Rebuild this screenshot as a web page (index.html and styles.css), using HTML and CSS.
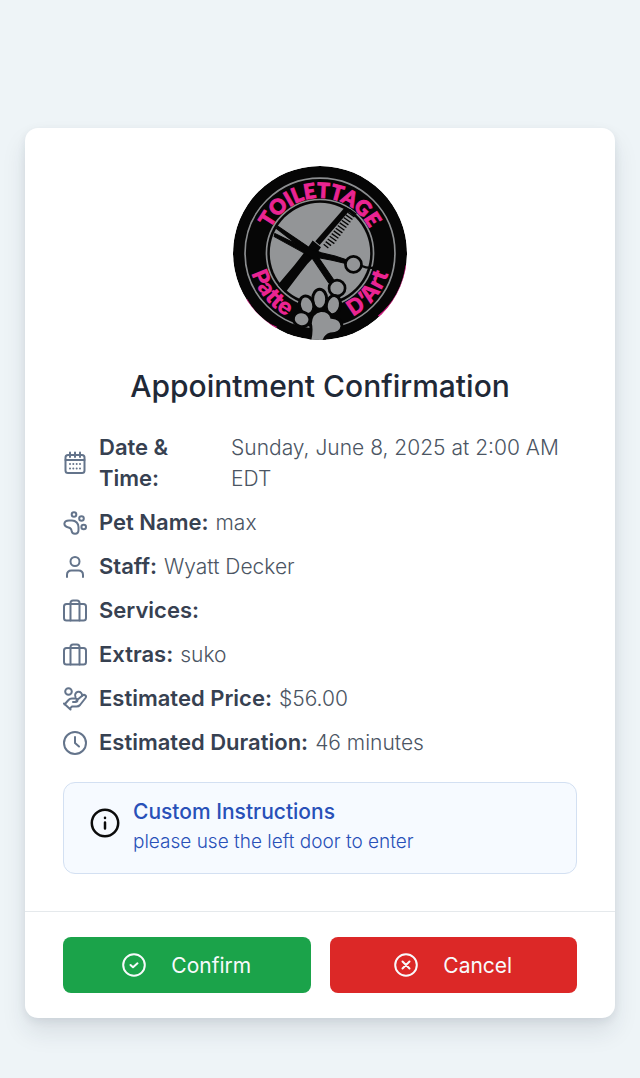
FILE: index.html
```html
<!doctype html>
<html lang="en">
<head>
    <meta charset="UTF-8">
    <meta name="viewport" content="width=device-width, initial-scale=1.0">
    <title>Appointment Confirmation</title>
    <link rel="stylesheet" href="styles.css">
</head>
<body>
    <main class="card">
        <div class="card-body">
            <svg class="logo" viewBox="40 33 520 520" role="img" aria-label="Toilettage Patte D'Art">
                <defs>
                    <path id="arcTop" d="M135 293 A165 165 0 0 1 465 293"/>
                    <path id="arcBottom" d="M86 293 A214 214 0 0 0 514 293"/>
                    <clipPath id="badge"><circle cx="300" cy="293" r="260"/></clipPath>
                </defs>
                <g clip-path="url(#badge)">
                    <circle cx="300" cy="293" r="260" fill="#060606"/>
                    <path d="M558 330 Q545 425 475 482 M80 432 Q115 495 170 516" fill="none" stroke="#d91c85" stroke-width="5"/>
                    <circle cx="300" cy="293" r="224" fill="none" stroke="#8c8e90" stroke-width="5"/>
                    <circle cx="300" cy="293" r="160" fill="none" stroke="#8c8e90" stroke-width="5"/>
                    <circle cx="300" cy="293" r="150" fill="#939597"/>
                    <!-- comb -->
                    <path d="M376 155 L391 163 L299 269 L286 258 Z" fill="#060606"/>
                    <path d="M389 163l20 14M383 171l20 14M377 179l20 14M371 187l20 14M365 195l20 14M359 203l20 14M353 211l20 14M347 219l20 14M341 227l20 14M335 235l20 14M329 243l20 14M323 251l20 14M317 259l16 12M311 267l14 11" stroke="#060606" stroke-width="4"/>
                    <path d="M278 256 L303 276 L285 302 Q260 326 242 351 L196 412 L174 388 L224 329 Q249 297 263 278 Z" fill="#060606"/>
                    <!-- scissors -->
                    <path d="M174 213 L276 282 L304 292 L345 302 L384 315 L379 325 L336 315 L296 307 L340 372 L337 386 L326 382 L277 309 L249 291 L163 244 L165 235 L229 266 L170 220 Z" fill="#060606" stroke="#060606" stroke-width="3"/>
                    <circle cx="400" cy="327" r="24" fill="#939597" stroke="#060606" stroke-width="8"/>
                    <circle cx="351" cy="398" r="24" fill="#939597" stroke="#060606" stroke-width="8"/>
                    <path d="M423 331 Q440 339 460 337" fill="none" stroke="#060606" stroke-width="7"/>
                    <!-- paw -->
                    <g fill="#939597" stroke="#060606" stroke-width="9">
                        <ellipse cx="299" cy="431" rx="21" ry="30"/>
                        <ellipse cx="260" cy="449" rx="21" ry="28" transform="rotate(-15 260 449)"/>
                        <ellipse cx="340" cy="449" rx="21" ry="29" transform="rotate(12 340 449)"/>
                        <ellipse cx="245" cy="491" rx="25" ry="22" transform="rotate(15 245 491)"/>
                        <path d="M271 503 Q273 470 302 465 Q329 464 335 485 Q365 488 366 512 Q363 535 332 535 Q313 540 310 563 L267 563 Q277 527 271 503 Z"/>
                    </g>
                    <text class="logo-text logo-text-top"><textPath href="#arcTop" startOffset="50%">TOILETTAGE</textPath></text>
                    <text class="logo-text logo-text-bottom"><textPath href="#arcBottom" startOffset="22%">Patte</textPath></text>
                    <text class="logo-text logo-text-bottom"><textPath href="#arcBottom" startOffset="78%">D’Art</textPath></text>
                </g>
            </svg>

            <h1>Appointment Confirmation</h1>

            <ul class="details">
                <li class="detail detail-date">
                    <svg class="icon" viewBox="0 0 24 24"><rect x="2.500" y="4" width="19" height="18" rx="2.500"/><path d="M2.500 9h19M7 1.500v4.500M12 1.500v4.500M17 1.500v4.500"/><path d="M7 13h.01M10.300 13h.01M13.700 13h.01M17 13h.01M7 17.500h.01M10.300 17.500h.01M13.700 17.500h.01M17 17.500h.01"/></svg>
                    <span class="label">Date &amp; Time:</span>
                    <span class="value">Sunday, June 8, 2025 at 2:00 AM EDT</span>
                </li>
                <li class="detail">
                    <svg class="icon" viewBox="0 0 24 24"><circle cx="11" cy="3.500" r="2.300"/><circle cx="18.500" cy="7.500" r="2.300"/><circle cx="20.700" cy="16" r="2.300"/><path d="M9 9.500c4 0 6.500 3 6.500 6.500v3c0 5-6.500 5-7 .5-.2-2-1.200-2.500-3-3C-.5 15 .5 9.500 6 9.500z"/></svg>
                    <span class="label">Pet Name:</span>
                    <span class="value">max</span>
                </li>
                <li class="detail">
                    <svg class="icon" viewBox="0 0 24 24"><circle cx="12" cy="6.500" r="4.500"/><path d="M4 22v-2c0-2.800 1.700-4.500 4.500-4.500h7c2.800 0 4.500 1.700 4.500 4.500v2"/></svg>
                    <span class="label">Staff:</span>
                    <span class="value">Wyatt Decker</span>
                </li>
                <li class="detail">
                    <svg class="icon" viewBox="0 0 24 24"><rect x="1" y="5" width="22" height="16.500" rx="2.500"/><path d="M7.500 21.500V4c0-1.700.8-2.500 2.500-2.500h4c1.700 0 2.500.8 2.500 2.500v17.500"/></svg>
                    <span class="label">Services:</span>
                    <span class="value"></span>
                </li>
                <li class="detail">
                    <svg class="icon" viewBox="0 0 24 24"><rect x="1" y="5" width="22" height="16.500" rx="2.500"/><path d="M7.500 21.500V4c0-1.700.8-2.500 2.500-2.500h4c1.700 0 2.500.8 2.500 2.500v17.500"/></svg>
                    <span class="label">Extras:</span>
                    <span class="value">suko</span>
                </li>
                <li class="detail">
                    <svg class="icon" viewBox="0 0 24 24"><circle cx="5.500" cy="4.500" r="3.300"/><path d="M12.500 10a3.500 3.500 0 1 1 6.500-1"/><path d="M1.500 17.500l4-4.500c1-1.200 2-1.500 3.500-1.500h3.500c2.800 0 2.500 3.500 0 3.500H10M13.500 13.500l6-5c2-1.500 4.500.3 3 2.500l-5.500 7c-1 1.200-2 1.500-3.500 1.500H9l-2 2M1 16.500l6.500 6"/></svg>
                    <span class="label">Estimated Price:</span>
                    <span class="value">$56.00</span>
                </li>
                <li class="detail">
                    <svg class="icon" viewBox="0 0 24 24"><circle cx="12" cy="12" r="11"/><path d="M12 6v6l4 3.500"/></svg>
                    <span class="label">Estimated Duration:</span>
                    <span class="value">46 minutes</span>
                </li>
            </ul>

            <section class="instructions">
                <svg class="info-icon" viewBox="0 0 30 30"><circle cx="15" cy="15" r="13.200"/><path d="M15 14.500v6M15 9.800v.1"/></svg>
                <div>
                    <h2>Custom Instructions</h2>
                    <p>please use the left door to enter</p>
                </div>
            </section>
        </div>

        <div class="actions">
            <button type="button" class="btn btn-confirm">
                <svg class="icon" viewBox="0 0 24 24"><circle cx="12" cy="12" r="10.800"/><path d="M8.500 12l2.500 2.300 4.500-4"/></svg>
                Confirm
            </button>
            <button type="button" class="btn btn-cancel">
                <svg class="icon" viewBox="0 0 24 24"><circle cx="12" cy="12" r="10.800"/><path d="M8.500 8.500l7 7M15.500 8.500l-7 7"/></svg>
                Cancel
            </button>
        </div>
    </main>
</body>
</html>
```
FILE: styles.css
```css
* {
    box-sizing: border-box;
}

body {
    margin: 0;
    padding: 128px 25px 60px;
    background-color: #eef4f7;
    font-family: Inter, "Liberation Sans", sans-serif;
    font-size: 21px;
    line-height: 31px;
    color: #4b5563;
}

.card {
    max-width: 640px;
    margin: 0 auto;
    background-color: #ffffff;
    border-radius: 13px;
    box-shadow: 0 14px 24px rgba(30, 41, 59, 0.1), 0 3px 8px rgba(30, 41, 59, 0.08);
}

.card-body {
    padding: 38px 38px 37px;
}

.logo {
    display: block;
    width: 174px;
    height: 174px;
    margin: 0 auto;
}

.logo-text {
    font-family: Lato, sans-serif;
    font-weight: 900;
    fill: #ea2492;
    text-anchor: middle;
}

.logo-text-top {
    font-size: 62px;
    stroke: #ea2492;
    stroke-width: 3;
}

.logo-text-bottom {
    font-family: Inter, sans-serif;
    font-size: 68px;
    font-weight: 800;
}

h1 {
    margin: 26px 0;
    font-size: 30px;
    line-height: 40px;
    font-weight: 500;
    text-align: center;
    color: #1f2937;
}

.details {
    display: flex;
    flex-direction: column;
    gap: 13px;
    margin: 0 0 24px;
    padding: 0;
    list-style: none;
}

.detail {
    display: flex;
    align-items: center;
    gap: 7px;
}

.icon {
    flex: none;
    width: 24px;
    height: 24px;
    fill: none;
    stroke: #64748b;
    stroke-width: 2;
    stroke-linecap: round;
    stroke-linejoin: round;
}

.detail .icon {
    margin-right: 5px;
}

.label {
    font-size: 22px;
    font-weight: 600;
    color: #374151;
}

.value {
    font-weight: 300;
}

.detail-date .label {
    flex: 0 0 125px;
    padding-right: 30px;
}

.instructions {
    display: flex;
    gap: 13px;
    padding: 13px 26px 16px;
    border: 1px solid #d3e0f2;
    border-radius: 12px;
    background-color: #f6faff;
}

.info-icon {
    flex: none;
    width: 30px;
    height: 30px;
    margin-top: 12px;
    fill: none;
    stroke: #0b0b0b;
    stroke-width: 2.5;
    stroke-linecap: round;
}

.instructions h2 {
    margin: 0;
    font-size: 21px;
    line-height: 31px;
    font-weight: 500;
    color: #2850b8;
}

.instructions p {
    margin: 0;
    font-size: 19px;
    line-height: 30px;
    font-weight: 300;
    color: #2850b8;
}

.actions {
    display: flex;
    gap: 19px;
    padding: 25px 38px;
    border-top: 1px solid #e5e9ec;
}

.btn {
    display: flex;
    flex: 1;
    align-items: center;
    justify-content: center;
    gap: 25px;
    height: 56px;
    border: none;
    border-radius: 8px;
    font: inherit;
    color: #f8fafc;
    cursor: pointer;
}

.btn .icon {
    stroke: #f8fafc;
}

.btn-confirm {
    background-color: #1ba34a;
}

.btn-cancel {
    background-color: #dc2827;
}
```
